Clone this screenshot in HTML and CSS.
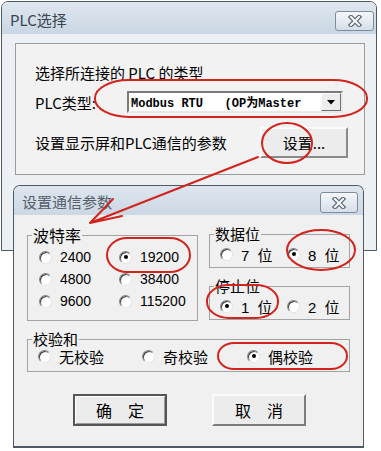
FILE: index.html
```html
<!DOCTYPE html>
<html lang="zh">
<head>
    <meta charset="UTF-8">
    <title>PLC选择</title>
    <link rel="stylesheet" href="styles.css">
</head>
<body>
    <!-- Jendela utama: pilih PLC -->
    <div class="window plc-window">
        <div class="titlebar">
            <span class="title">PLC选择</span>
            <span class="close-btn">
                <svg width="16" height="12" viewBox="0 0 16 12"><path d="M4 2 L12 10 M12 2 L4 10" stroke="#56616d" stroke-width="4.4" stroke-linecap="square"/><path d="M4 2 L12 10 M12 2 L4 10" stroke="#f6f8fa" stroke-width="2.2" stroke-linecap="square"/></svg>
            </span>
        </div>
        <div class="client">
            <div class="panel">
                <div class="row row-intro">选择所连接的 PLC 的类型</div>
                <div class="row row-type">
                    <span class="type-label">PLC类型:</span>
                    <div class="combo">
                        <span class="combo-text">Modbus RTU   (OP为Master</span>
                        <span class="combo-btn">
                            <svg width="8" height="5" viewBox="0 0 8 5"><path d="M0 0 H8 L4 4.5 Z" fill="#000"/></svg>
                        </span>
                    </div>
                </div>
                <div class="row row-setup">
                    <span class="setup-label">设置显示屏和PLC通信的参数</span>
                    <span class="btn btn-setup">设置...</span>
                </div>
            </div>
        </div>
    </div>

    <!-- Dialog: parameter komunikasi -->
    <div class="window comm-dialog">
        <div class="titlebar dialog-bar">
            <span class="title dialog-title">设置通信参数</span>
            <span class="close-btn dialog-close">
                <svg width="16" height="12" viewBox="0 0 16 12"><path d="M4 2 L12 10 M12 2 L4 10" stroke="#56616d" stroke-width="4.4" stroke-linecap="square"/><path d="M4 2 L12 10 M12 2 L4 10" stroke="#f6f8fa" stroke-width="2.2" stroke-linecap="square"/></svg>
            </span>
        </div>
        <div class="dialog-body">
            <div class="groups">
                <fieldset class="group baud">
                    <legend class="big">波特率</legend>
                    <div class="opts baud-opts">
                        <span class="opt"><i class="radio"></i>2400</span>
                        <span class="opt"><i class="radio on"></i>19200</span>
                        <span class="opt"><i class="radio"></i>4800</span>
                        <span class="opt"><i class="radio"></i>38400</span>
                        <span class="opt"><i class="radio"></i>9600</span>
                        <span class="opt"><i class="radio"></i>115200</span>
                    </div>
                </fieldset>
                <div class="right-col">
                    <fieldset class="group small">
                        <legend>数据位</legend>
                        <div class="opts bits-opts">
                            <span class="opt"><i class="radio"></i>7 位</span>
                            <span class="opt"><i class="radio on"></i>8 位</span>
                        </div>
                    </fieldset>
                    <fieldset class="group small stop">
                        <legend>停止位</legend>
                        <div class="opts bits-opts">
                            <span class="opt"><i class="radio on"></i>1 位</span>
                            <span class="opt"><i class="radio"></i>2 位</span>
                        </div>
                    </fieldset>
                </div>
            </div>
            <fieldset class="group parity">
                <legend>校验和</legend>
                <div class="opts parity-opts">
                    <span class="opt"><i class="radio"></i>无校验</span>
                    <span class="opt"><i class="radio"></i>奇校验</span>
                    <span class="opt"><i class="radio on"></i>偶校验</span>
                </div>
            </fieldset>
            <div class="actions">
                <span class="btn btn-default">确　定</span>
                <span class="btn">取　消</span>
            </div>
        </div>
    </div>

    <!-- Tanda merah (anotasi) -->
    <svg class="marks" width="381" height="451" viewBox="0 0 381 451">
        <g fill="none" stroke="#d2231c" stroke-width="2">
            <rect x="95" y="80" width="272" height="37" rx="34" ry="18"/>
            <ellipse cx="287" cy="143" rx="25" ry="20"/>
            <rect x="107" y="238" width="83" height="34" rx="20" ry="17"/>
            <ellipse cx="321" cy="250" rx="34" ry="20"/>
            <rect x="207" y="285" width="71" height="33" rx="22" ry="16"/>
            <rect x="218" y="343" width="129" height="26" rx="16" ry="13"/>
            <path d="M258 157 L90 223 M90 223 L113 199 M90 223 L122 216" stroke-linecap="round"/>
        </g>
    </svg>
</body>
</html>
```

FILE: styles.css
```css
/* Dasar halaman */
body {
    margin: 0;
    padding: 1px;
    background: #fff;
    font-family: "Liberation Sans", "Noto Sans CJK SC", sans-serif;
    color: #000;
    position: relative;
    width: 381px;
    height: 451px;
    box-sizing: border-box;
    overflow: hidden;
}

/* Jendela ala Windows 7 */
.window {
    box-sizing: border-box;
    border: 1px solid #4f5966;
    border-radius: 7px 7px 0 0;
    background: #edf0f3;
}

.plc-window {
    width: 376px;
    height: 250px;
}

.titlebar {
    height: 32px;
    display: flex;
    align-items: center;
    justify-content: space-between;
    padding: 0 2px 0 8px;
    background: linear-gradient(#dfe7ef, #c9d6e3);
    border-radius: 6px 6px 0 0;
}
.title {
    font-family: "Noto Sans CJK SC", sans-serif;
    font-size: 15px;
    color: #3a4450;
    margin-top: 3px;
}

.close-btn {
    width: 39px;
    height: 20px;
    box-sizing: border-box;
    border: 1px solid #7d8b9a;
    border-radius: 3px;
    background: linear-gradient(#f4f7fa, #d5dee8);
    display: flex;
    align-items: center;
    justify-content: center;
    align-self: flex-start;
    margin-top: 9px;
}

.client {
    padding: 9px 11px 0 13px;
}

/* Panel dalam */
.panel {
    height: 132px;
    box-sizing: border-box;
    border: 1px solid #9b9b9b;
    background: #f2f2f2;
    padding: 19px 0 0 19px;
    font-family: "Noto Sans CJK SC", sans-serif;
    font-size: 15px;
}
.row {
    display: flex;
    align-items: center;
}
.row-intro {
    height: 18px;
}
.row-type {
    height: 22px;
    margin-top: 10px;
}
.row-setup {
    height: 31px;
    margin-top: 14px;
}
.type-label {
    width: 92px;
}
.setup-label {
    width: 225px;
}

.combo {
    width: 216px;
    height: 22px;
    box-sizing: border-box;
    background: #fff;
    border: 2px solid;
    border-color: #7a7a7a #e8e8e8 #e8e8e8 #7a7a7a;
    display: flex;
    align-items: center;
}
.combo-text {
    flex: 1;
    white-space: pre;
    font-family: "Liberation Mono", "Noto Sans CJK SC", monospace;
    font-size: 12px;
    font-weight: bold;
    padding-left: 2px;
}
.combo-btn {
    width: 20px;
    height: 18px;
    box-sizing: border-box;
    background: #ececec;
    border: 1px solid;
    border-color: #fff #6e6e6e #6e6e6e #fff;
    display: flex;
    align-items: center;
    justify-content: center;
}

/* Tombol */
.btn {
    box-sizing: border-box;
    display: flex;
    align-items: center;
    justify-content: center;
    background: #ececec;
    border: 2px solid;
    border-color: #fbfbfb #7c7c7c #7c7c7c #fbfbfb;
    font-family: "Noto Sans CJK SC", sans-serif;
    font-size: 16px;
    width: 95px;
    height: 32px;
}
.btn-setup {
    width: 88px;
    height: 31px;
    font-size: 15px;
    border-color: #fbfbfb #8a8a8a #8a8a8a #fbfbfb;
}
.btn-default {
    border: 2px solid #555;
    box-shadow: inset 1px 1px 0 #fff, inset -1px -1px 0 #9a9a9a;
}

/* Dialog */
.comm-dialog {
    position: absolute;
    left: 13px;
    top: 185px;
    width: 351px;
    height: 263px;
    border-bottom-width: 2px;
    background: #f0f0f0;
}
.dialog-bar {
    height: 29px;
    padding: 0 5px 0 8px;
    background: linear-gradient(#dde6ee, #cbd7e3);
}
.dialog-title {
    color: #55606b;
    margin-top: 2px;
}
.dialog-close {
    width: 38px;
    height: 21px;
    margin-top: 6px;
}

.dialog-body {
    padding: 12px 0 0 13px;
}
.groups {
    display: grid;
    grid-template-columns: 171px 141px;
    column-gap: 11px;
}
.right-col {
    display: flex;
    flex-direction: column;
}

/* Group box */
.group {
    margin: 0;
    padding: 0;
    border: 1px solid #a3a3a3;
    min-width: 0;
}
.group legend {
    padding: 0 1px;
    margin-left: 4px;
    font-family: "Noto Sans CJK SC", sans-serif;
    font-size: 15px;
    line-height: 14px;
}
.group legend.big {
    font-size: 16px;
    line-height: 16px;
}

.opts {
    display: grid;
    font-size: 14px;
}
.opt {
    display: flex;
    align-items: center;
    gap: 8px;
    white-space: nowrap;
}
.bits-opts .opt,
.parity-opts .opt {
    font-size: 15px;
    word-spacing: 4px;
}

.baud-opts {
    grid-template-columns: 80px 1fr;
    grid-auto-rows: 22px;
    padding: 3px 0 8px 11px;
}
.bits-opts {
    grid-template-columns: 67px 1fr;
    grid-auto-rows: 22px;
    padding: 2px 0 2px 10px;
}
.stop {
    margin-top: 11px;
}
.parity {
    width: 323px;
    box-sizing: border-box;
    margin-top: 11px;
}
.parity-opts {
    grid-template-columns: 104px 105px 1fr;
    grid-auto-rows: 20px;
    padding: 0 0 5px 10px;
}

/* Radio cekung */
.radio {
    width: 13px;
    height: 13px;
    box-sizing: border-box;
    border-radius: 50%;
    background: #fff;
    border: 1px solid;
    border-color: #858585 #e4e4e4 #e4e4e4 #858585;
    box-shadow: inset 1px 1px 0 #3f3f3f;
    display: flex;
    align-items: center;
    justify-content: center;
    flex: none;
}
.radio.on::after {
    content: "";
    width: 4px;
    height: 4px;
    border-radius: 50%;
    background: #000;
}

.actions {
    display: flex;
    gap: 45px;
    padding-left: 46px;
    margin-top: 22px;
}
.actions .btn {
    width: 94px;
}

/* Lapisan anotasi */
.marks {
    position: absolute;
    left: 0;
    top: 0;
    pointer-events: none;
}
```
